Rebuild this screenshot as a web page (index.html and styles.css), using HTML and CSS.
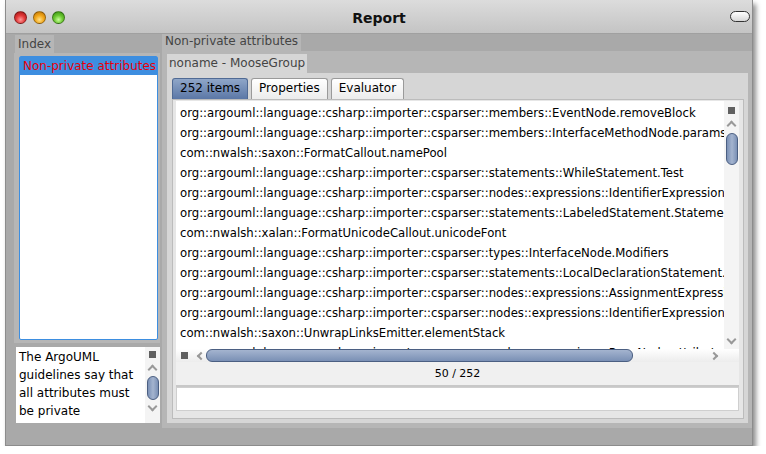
FILE: index.html
```html
<!DOCTYPE html>
<html>
<head>
<meta charset="utf-8">
<link rel="stylesheet" href="styles.css">
</head>
<body>
<div class="window">
  <div class="titlebar">
    <div class="lights">
      <span class="light red"></span>
      <span class="light orange"></span>
      <span class="light green"></span>
    </div>
    <div class="title">Report</div>
    <span class="pill"></span>
  </div>
  <div class="content">
    <div class="leftcol">
      <div class="tab tab-index">Index</div>
      <div class="index-panel">
        <div class="index-list">
          <div class="index-item">Non-private attributes</div>
        </div>
      </div>
      <div class="desc">
        <div class="desc-text">The ArgoUML guidelines say that all attributes must be private</div>
        <div class="vscroll small">
          <span class="sq"></span>
          <span class="chev up"></span>
          <span class="thumb"></span>
          <span class="chev down"></span>
        </div>
      </div>
    </div>
    <div class="rightcol">
      <div class="tab tab-outer">Non-private attributes</div>
      <div class="outer-panel">
        <div class="tab tab-inner">noname - MooseGroup</div>
        <div class="inner-panel">
          <div class="tabs">
            <div class="ptab sel">252 items</div>
            <div class="ptab">Properties</div>
            <div class="ptab">Evaluator</div>
          </div>
          <div class="tabbody">
            <div class="listwrap">
              <div class="listrow">
                <div class="list">
                  <div class="row">org::argouml::language::csharp::importer::csparser::members::EventNode.removeBlock</div>
                  <div class="row">org::argouml::language::csharp::importer::csparser::members::InterfaceMethodNode.params</div>
                  <div class="row">com::nwalsh::saxon::FormatCallout.namePool</div>
                  <div class="row">org::argouml::language::csharp::importer::csparser::statements::WhileStatement.Test</div>
                  <div class="row">org::argouml::language::csharp::importer::csparser::nodes::expressions::IdentifierExpression.Identifier</div>
                  <div class="row">org::argouml::language::csharp::importer::csparser::statements::LabeledStatement.Statement</div>
                  <div class="row">com::nwalsh::xalan::FormatUnicodeCallout.unicodeFont</div>
                  <div class="row">org::argouml::language::csharp::importer::csparser::types::InterfaceNode.Modifiers</div>
                  <div class="row">org::argouml::language::csharp::importer::csparser::statements::LocalDeclarationStatement.Type</div>
                  <div class="row">org::argouml::language::csharp::importer::csparser::nodes::expressions::AssignmentExpression.Operator</div>
                  <div class="row">org::argouml::language::csharp::importer::csparser::nodes::expressions::IdentifierExpression.Identifier</div>
                  <div class="row">com::nwalsh::saxon::UnwrapLinksEmitter.elementStack</div>
                  <div class="row">org::argouml::language::csharp::importer::csparser::nodes::expressions::BaseNode.attributes</div>
                </div>
                <div class="vscroll big">
                  <span class="sq"></span>
                  <span class="chev up"></span>
                  <span class="thumb"></span>
                  <span class="spacer"></span>
                  <span class="chev down"></span>
                </div>
              </div>
              <div class="hscroll">
                <span class="sq"></span>
                <span class="chev left"></span>
                <span class="hthumb"></span>
                <span class="htrack"></span>
                <span class="chev right"></span>
              </div>
            </div>
            <div class="status">50 / 252</div>
            <div class="input"></div>
          </div>
        </div>
      </div>
    </div>
  </div>
</div>
</body>
</html>
```
FILE: styles.css
```css
* { box-sizing: border-box; }
html, body { margin: 0; padding: 0; background: #ffffff; }
body { font-family: "DejaVu Sans", sans-serif; font-size: 12px; color: #000; }

.window {
  margin-left: 5px;
  width: 748px;
  height: 446px;
  background: #a9a9a9;
  border: 1px solid #8c8c8c;
  border-top: none;
  box-shadow: 3px 4px 5px rgba(0,0,0,0.45);
  display: flex;
  flex-direction: column;
  overflow: hidden;
}

.titlebar {
  height: 34px;
  flex: none;
  background: linear-gradient(#dcdcdc, #c4c4c4);
  display: flex;
  align-items: center;
  position: relative;
  border-bottom: 1px solid #a0a0a0;
}
.lights { display: flex; gap: 6px; padding-left: 8px; padding-top: 1px; }
.light {
  width: 13px; height: 13px; border-radius: 50%;
  border: 1px solid rgba(0,0,0,0.35);
}
.red { background: radial-gradient(circle at 50% 70%, #ff9a9a 0%, #e23a3a 45%, #9c1010 100%); }
.orange { background: radial-gradient(circle at 50% 70%, #ffe08a 0%, #f2a81c 45%, #b86d00 100%); }
.green { background: radial-gradient(circle at 50% 70%, #c8ff9a 0%, #6cc832 45%, #2f8a0a 100%); }
.title {
  position: absolute; left: 0; right: 0; text-align: center;
  font-weight: bold; font-size: 14px; top: 10px; color: #111;
}
.pill {
  margin-left: auto; margin-right: 2px; margin-top: 0;
  width: 20px; height: 11px; border-radius: 6px;
  border: 1px solid #333; background: linear-gradient(#ffffff, #d8d8d8);
}

.content {
  flex: 1;
  display: flex;
  padding: 0 0 17px 8px;
  gap: 2px;
}

.tab {
  display: inline-block;
  color: #444;
  font-size: 12px;
  line-height: 18px;
  padding: 0 3px;
}

.leftcol { flex: none; width: 146px; display: flex; flex-direction: column; padding-top: 1px; }
.tab-index { align-self: flex-start; background: #b6b6b6; padding: 0 3px; margin-left: 1px; }
.index-panel {
  background: #b6b6b6; height: 290px; padding: 3px 2px 3px 5px;
}
.index-list {
  height: 284px; background: #fff; border: 1px solid #3d8ee0; border-radius: 2px;
}
.index-item { background: #3d8ee0; color: #e8000a; line-height: 18px; padding-left: 3px; font-size: 12px; white-space: nowrap; }

.desc {
  margin-top: 4px; margin-left: 2px; height: 76px; display: flex; background: #fff;
}
.desc-text { flex: 1; padding: 1px 3px; font-size: 12px; line-height: 18px; overflow: hidden; }

.vscroll { flex: none; width: 15px; background: #f4f4f4; display: flex; flex-direction: column; align-items: center; }
.vscroll .sq { width: 7px; height: 7px; background: #606060; margin-top: 4px; }
.vscroll .thumb { width: 12px; border-radius: 6px; border: 1px solid #4b5f82; background: linear-gradient(90deg, #7a90b5, #a4b4cf 50%, #7a90b5); }
.vscroll.small .thumb { height: 24px; margin-top: 3px; }
.vscroll.big .thumb { height: 32px; margin-top: 4px; }
.vscroll .spacer { flex: 1; }
.chev { width: 7px; height: 7px; border: solid #999; border-width: 2px 2px 0 0; display: block; }
.chev.up { transform: rotate(-45deg); margin-top: 8px; }
.chev.down { transform: rotate(135deg); margin-top: 2px; }
.vscroll.small .chev.down { margin-top: 3px; }
.vscroll.big .chev.down { margin-bottom: 6px; }
.vscroll.big .sq { margin-top: 6px; }

.rightcol { flex: 1; min-width: 0; display: flex; flex-direction: column; }
.tab-outer { align-self: flex-start; background: #b6b6b6; line-height: 19px; margin-top: -2px; padding: 0 3px; }
.outer-panel { flex: 1; background: #b6b6b6; padding: 3px 4px 5px 5px; display: flex; flex-direction: column; min-width: 0; }
.tab-inner { align-self: flex-start; background: #d6d6d6; line-height: 19px; padding: 0 2px; }
.inner-panel { flex: 1; background: #d6d6d6; padding: 5px 4px 4px 5px; display: flex; flex-direction: column; min-width: 0; }

.tabs { display: flex; gap: 3px; height: 21px; }
.ptab {
  border: 1px solid #9a9a9a; border-bottom: none; border-radius: 3px 3px 0 0;
  background: linear-gradient(#ffffff, #ececec); padding: 0 7px; line-height: 19px; font-size: 12px;
}
.ptab.sel { background: linear-gradient(#8fa6c8, #5b77a6); border-color: #506a94; color: #000; }
.tabbody {
  flex: 1; background: #e6e6e6; border: 1px solid #bcbcbc; padding: 1px 4px 4px 3px; display: flex; flex-direction: column; min-width: 0;
}
.listwrap { background: #fff; height: 261px; display: flex; flex-direction: column; min-width: 0; }
.listrow { display: flex; height: 248px; min-width: 0; }
.list { flex: 1; min-width: 0; overflow: hidden; padding: 2px 0 0 4px; font-size: 11.7px; }
.row { white-space: nowrap; line-height: 20px; height: 20px; }
.hscroll { height: 13px; display: flex; align-items: center; background: linear-gradient(#ffffff, #ececec); padding-left: 5px; }
.hscroll .sq { width: 7px; height: 7px; background: #606060; flex: none; }
.chev.left { transform: rotate(-135deg); margin-left: 10px; width: 6px; height: 6px; flex: none; }
.hthumb { flex: none; width: 427px; height: 13px; border-radius: 6px; border: 1px solid #4b5f82; background: linear-gradient(#a4b4cf, #7a90b5); margin-left: 2px; }
.htrack { flex: 1; }
.chev.right { transform: rotate(45deg); margin-right: 22px; width: 6px; height: 6px; flex: none; }
.status { height: 25px; line-height: 24px; text-align: center; font-size: 11px; background: #f0f0f0; border-bottom: 2px solid #c8c8c8; }
.input { height: 24px; background: #fff; border: 1px solid #cfcfcf; }
```
